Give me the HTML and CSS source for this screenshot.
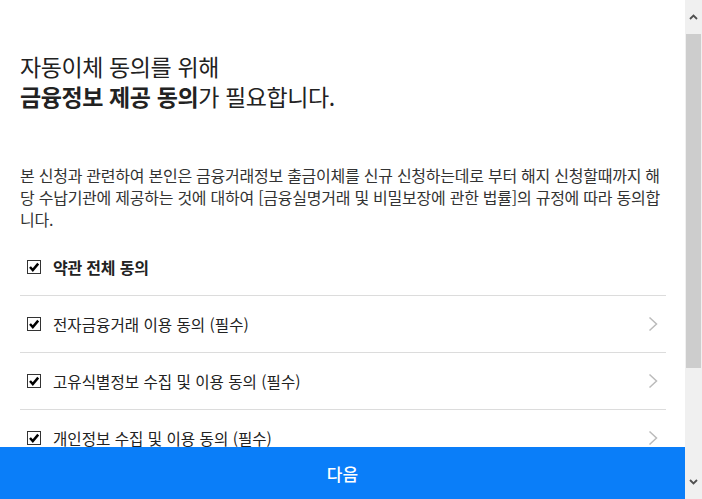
FILE: index.html
```html
<!DOCTYPE html>
<html lang="ko">
  <head>
    <meta charset="UTF-8" />
    <meta name="viewport" content="width=device-width, initial-scale=1.0" />
    <title>금융정보 제공 동의</title>
    <link rel="stylesheet" href="styles.css">
  </head>
  <body>
    <div class="screen">
      <div class="page">
        <h1 class="title">
          <span class="line">자동이체 동의를 위해</span>
          <span class="line"><strong>금융정보 제공 동의</strong>가 필요합니다.</span>
        </h1>

        <p class="desc">
          본 신청과 관련하여 본인은 금융거래정보 출금이체를 신규 신청하는데로 부터 해지 신청할때까지 해당 수납기관에 제공하는 것에 대하여 [금융실명거래 및 비밀보장에 관한 법률]의 규정에 따라 동의합니다.
        </p>

        <ul class="terms">
          <li class="all">
            <span class="check"><svg viewBox="0 0 12 12"><path d="M2 6 L4.8 9 L10.2 2.6" /></svg></span>
            <span class="label">약관 전체 동의</span>
          </li>
          <li>
            <span class="check"><svg viewBox="0 0 12 12"><path d="M2 6 L4.8 9 L10.2 2.6" /></svg></span>
            <span class="label">전자금융거래 이용 동의 (필수)</span>
            <svg class="arrow" viewBox="0 0 10 16"><path d="M1.5 1.5 L8.5 8 L1.5 14.5" /></svg>
          </li>
          <li>
            <span class="check"><svg viewBox="0 0 12 12"><path d="M2 6 L4.8 9 L10.2 2.6" /></svg></span>
            <span class="label">고유식별정보 수집 및 이용 동의 (필수)</span>
            <svg class="arrow" viewBox="0 0 10 16"><path d="M1.5 1.5 L8.5 8 L1.5 14.5" /></svg>
          </li>
          <li>
            <span class="check"><svg viewBox="0 0 12 12"><path d="M2 6 L4.8 9 L10.2 2.6" /></svg></span>
            <span class="label">개인정보 수집 및 이용 동의 (필수)</span>
            <svg class="arrow" viewBox="0 0 10 16"><path d="M1.5 1.5 L8.5 8 L1.5 14.5" /></svg>
          </li>
        </ul>

        <button class="next" type="button">다음</button>
      </div>

      <!-- 스크롤바 모양 -->
      <div class="scrollbar">
        <span class="sb-btn"><svg viewBox="0 0 9 6"><path d="M1 5 L4.5 1.5 L8 5" /></svg></span>
        <div class="sb-track">
          <div class="sb-thumb"></div>
        </div>
        <span class="sb-btn"><svg viewBox="0 0 9 6"><path d="M1 1 L4.5 4.5 L8 1" /></svg></span>
      </div>
    </div>
  </body>
</html>
```

FILE: styles.css
```css
* {
  margin: 0;
  padding: 0;
  box-sizing: border-box;
}
html,
body {
  height: 100%;
  overflow: hidden;
}
body {
  font-family: "Noto Sans CJK KR", "Noto Sans", sans-serif;
  color: #222;
  background: #fff;
}
.screen {
  display: flex;
  height: 100%;
}
.page {
  flex: 1;
  position: relative;
  overflow: hidden;
  padding: 51px 19px 0 20px;
}
.title {
  font-size: 23px;
  font-weight: 400;
  line-height: 30px;
  letter-spacing: -0.4px;
  color: #222;
}
.title .line {
  display: block;
  height: 30px;
}
.title strong {
  font-weight: 700;
}
.desc {
  margin-top: 53px;
  font-size: 16px;
  line-height: 22px;
  letter-spacing: -0.25px;
  color: #333;
}
.terms {
  list-style: none;
  margin-top: 9px;
}
.terms li {
  display: flex;
  align-items: center;
  height: 57px;
  padding-left: 7px;
  border-bottom: 1px solid #dcdcdc;
}
.terms .check {
  width: 14px;
  height: 14px;
  border: 1px solid #333;
  background: #fff;
  flex-shrink: 0;
}
.terms .check svg {
  display: block;
  width: 12px;
  height: 12px;
  fill: none;
  stroke: #000;
  stroke-width: 2.5;
}
.terms .label {
  margin-left: 12px;
  font-size: 15.6px;
  letter-spacing: 0;
  color: #222;
}
.terms .all .label {
  font-size: 16px;
  letter-spacing: -0.2px;
  font-weight: 700;
}
.terms .arrow {
  margin-left: auto;
  margin-right: 8px;
  width: 10px;
  height: 16px;
  fill: none;
  stroke: #bbb;
  stroke-width: 1.5;
}
.next {
  position: absolute;
  left: 0;
  right: 0;
  bottom: 0;
  height: 52px;
  border: none;
  background: #0a7ef9;
  color: #fff;
  font-family: inherit;
  font-size: 17px;
  font-weight: 500;
}
.scrollbar {
  width: 17px;
  display: flex;
  flex-direction: column;
  background: #f0f0f0;
}
.sb-btn {
  height: 34px;
  display: flex;
  align-items: center;
  justify-content: center;
}
.sb-btn svg {
  width: 9px;
  height: 6px;
  fill: none;
  stroke: #505050;
  stroke-width: 1.8;
}
.sb-track {
  flex: 1;
  padding: 0 1px;
}
.sb-thumb {
  height: 334px;
  background: #cdcdcd;
}
```
